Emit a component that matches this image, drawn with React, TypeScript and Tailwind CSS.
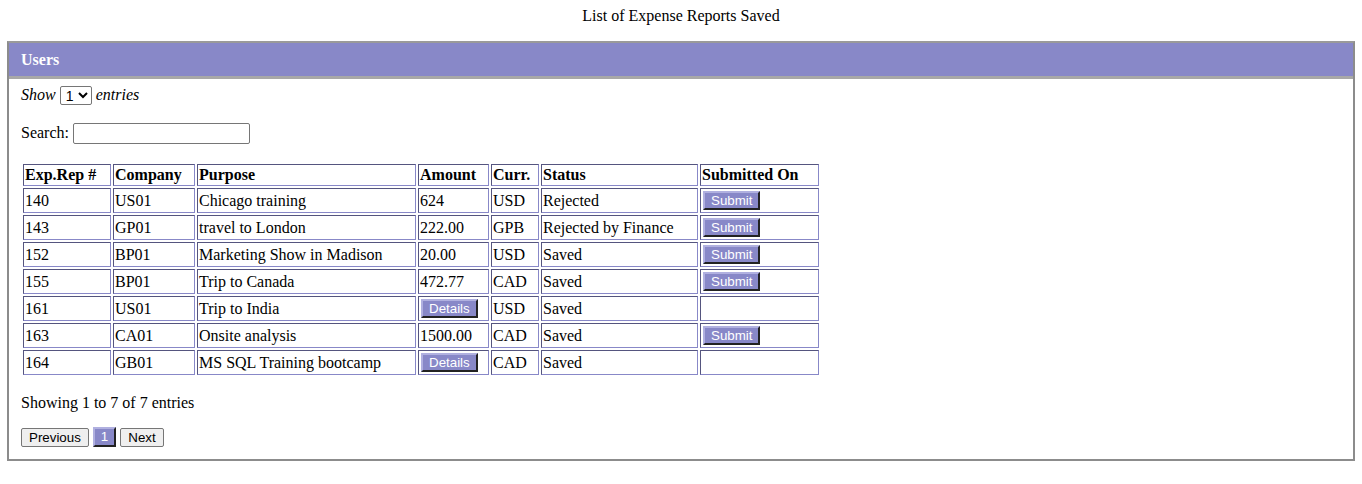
const rows = [
	{ id: "140", co: "US01", purpose: "Chicago training", amount: "624", curr: "USD", status: "Rejected", submit: true },
	{ id: "143", co: "GP01", purpose: "travel to London", amount: "222.00", curr: "GPB", status: "Rejected by Finance", submit: true },
	{ id: "152", co: "BP01", purpose: "Marketing Show in Madison", amount: "20.00", curr: "USD", status: "Saved", submit: true },
	{ id: "155", co: "BP01", purpose: "Trip to Canada", amount: "472.77", curr: "CAD", status: "Saved", submit: true },
	{ id: "161", co: "US01", purpose: "Trip to India", amount: "", curr: "USD", status: "Saved", submit: false },
	{ id: "163", co: "CA01", purpose: "Onsite analysis", amount: "1500.00", curr: "CAD", status: "Saved", submit: true },
	{ id: "164", co: "GB01", purpose: "MS SQL Training bootcamp", amount: "", curr: "CAD", status: "Saved", submit: false },
];

const cell =
	"border border-t-[#55557f] border-l-[#55557f] border-b-[#8888c8] border-r-[#8888c8] px-[1px] py-0 align-middle";

function PurpleButton({ label }: { label: string }) {
	return (
		<button className="bg-[#8888c8] text-white text-[13.33px] font-['Liberation_Sans',sans-serif] leading-[15px] px-[6px] h-[19px] border-2 border-t-[#b0b0e0] border-l-[#b0b0e0] border-b-[#222] border-r-[#222] ml-[1px]">
			{label}
		</button>
	);
}

export default function App() {
	return (
		<div className="font-['Liberation_Serif',serif] text-[16px] text-black bg-white w-[1362px] h-[484px] px-[7px] pt-[6px]">
			<p className="text-center leading-[20px] mb-[15px]">List of Expense Reports Saved</p>
			<div className="border-2 border-[#8c8c8c] border-t-[#9a9a9a]">
				<div className="bg-[#8888c8] h-[36px] flex items-center px-[12px] border-b-[3px] border-[#a8a8a8]">
					<span className="text-white font-bold text-[16px]">Users</span>
				</div>
				<div className="px-[12px] pt-[5px] pb-[12px]">
					<div className="flex items-center gap-[4px] italic h-[22px]">
						<span>Show</span>
						<select className="not-italic border border-[#767676] rounded-[2px] text-[14px] font-['Liberation_Sans',sans-serif] h-[19px] px-[1px]">
							<option>1</option>
						</select>
						<span>entries</span>
					</div>
					<div className="flex items-center gap-[4px] mt-[16px] h-[22px]">
						<span>Search:</span>
						<input className="border border-[#767676] rounded-[2px] w-[177px] h-[21px]" />
					</div>
					<table className="border-separate border-spacing-[2px] mt-[18px] leading-[18px]">
						<thead>
							<tr className="font-bold text-left">
								<th className={`${cell} h-[22px] w-[88px]`}>Exp.Rep #</th>
								<th className={`${cell} h-[22px] w-[82px]`}>Company</th>
								<th className={`${cell} h-[22px] w-[219px]`}>Purpose</th>
								<th className={`${cell} h-[22px] w-[71px]`}>Amount</th>
								<th className={`${cell} h-[22px] w-[48px]`}>Curr.</th>
								<th className={`${cell} h-[22px] w-[157px]`}>Status</th>
								<th className={`${cell} h-[22px] w-[119px]`}>Submitted On</th>
							</tr>
						</thead>
						<tbody>
							{rows.map((r) => (
								<tr key={r.id}>
									<td className={`${cell} h-[25px]`}>{r.id}</td>
									<td className={`${cell} h-[25px]`}>{r.co}</td>
									<td className={`${cell} h-[25px]`}>{r.purpose}</td>
									<td className={`${cell} h-[25px]`}>{r.amount || <PurpleButton label="Details" />}</td>
									<td className={`${cell} h-[25px]`}>{r.curr}</td>
									<td className={`${cell} h-[25px]`}>{r.status}</td>
									<td className={`${cell} h-[25px]`}>{r.submit && <PurpleButton label="Submit" />}</td>
								</tr>
							))}
						</tbody>
					</table>
					<p className="mt-[16px] leading-[20px]">Showing 1 to 7 of 7 entries</p>
					<div className="flex items-center gap-[4px] mt-[14px] font-['Liberation_Sans',sans-serif] text-[13.33px]">
						<button className="bg-[#efefef] border border-[#767676] rounded-[2px] px-[7px] h-[19px] leading-[17px]">Previous</button>
						<button className="bg-[#8888c8] text-white border-2 border-t-[#b0b0e0] border-l-[#b0b0e0] border-b-[#222] border-r-[#222] px-[6px] h-[20px] leading-[16px]">1</button>
						<button className="bg-[#efefef] border border-[#767676] rounded-[2px] px-[7px] h-[19px] leading-[17px]">Next</button>
					</div>
				</div>
			</div>
		</div>
	);
}
